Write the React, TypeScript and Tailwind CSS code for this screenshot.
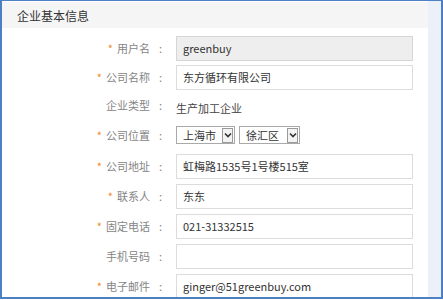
import React from 'react';

interface Field {
  label: string;
  required: boolean;
  value?: string;
  kind: 'input' | 'disabled' | 'text' | 'select';
  h: string;
}

const FIELDS: Field[] = [
  { label: '用户名', required: true, value: 'greenbuy', kind: 'disabled', h: 'h-[29px]' },
  { label: '公司名称', required: true, value: '东方循环有限公司', kind: 'input', h: 'h-[29px]' },
  { label: '企业类型', required: false, value: '生产加工企业', kind: 'text', h: 'h-[27px]' },
  { label: '公司位置', required: true, kind: 'select', h: 'h-[32px]' },
  { label: '公司地址', required: true, value: '虹梅路1535号1号楼515室', kind: 'input', h: 'h-[30px]' },
  { label: '联系人', required: true, value: '东东', kind: 'input', h: 'h-[30px]' },
  { label: '固定电话', required: true, value: '021-31332515', kind: 'input', h: 'h-[30px]' },
  { label: '手机号码', required: false, value: '', kind: 'input', h: 'h-[30px]' },
  { label: '电子邮件', required: true, value: 'ginger@51greenbuy.com', kind: 'input', h: 'h-[30px]' },
];

function Chevron() {
  return (
    <svg width="8" height="6" viewBox="0 0 8 6" fill="none">
      <path d="M1 1.5 L4 4.5 L7 1.5" stroke="#333" strokeWidth="1.6" />
    </svg>
  );
}

function FakeSelect({ value, w }: { value: string; w: string }) {
  return (
    <div className={`flex h-[18px] ${w} items-center justify-between border border-[#a9a9a9] bg-white pl-[6px] pr-[1px]`}>
      <span className="text-[11px] leading-none text-[#333]">{value}</span>
      <div className="flex h-[15px] w-[11px] items-center justify-center border border-[#9a9a9a] bg-[#f3f3f3]">
        <Chevron />
      </div>
    </div>
  );
}

export default function App() {
  return (
    <div
      className="flex h-[299px] w-[443px] overflow-hidden border-[#4d7fc4] border-t border-r-2 border-b-2 border-l-2 bg-white"
      style={{ fontFamily: '"Noto Sans CJK SC", "Microsoft YaHei", sans-serif' }}
    >
      <div className="flex min-h-0 flex-1 flex-col">
        {/* Section header */}
        <div className="mt-[1px] flex h-[26px] shrink-0 items-center bg-[#f5f5f5] pl-[15px] pt-[2px] text-[12px] text-[#333]">
          企业基本信息
        </div>

        <div className="mt-[6px] flex shrink-0 flex-col">
          {FIELDS.map((f) => (
            <div key={f.label} className={`flex shrink-0 items-center ${f.h}`}>
              <div className="flex w-[163px] items-center justify-end text-[11px] text-[#858585]">
                {f.required && <span className="mr-[4px] text-[#f08a2a]">*</span>}
                <span>{f.label}</span>
                <span className="ml-[9px] w-[6px]">:</span>
              </div>
              <div className="ml-[11px]">
                {f.kind === 'text' && (
                  <span className="text-[11px] text-[#444]">{f.value}</span>
                )}
                {f.kind === 'select' && (
                  <div className="flex gap-[4px]">
                    <FakeSelect value="上海市" w="w-[59px]" />
                    <FakeSelect value="徐汇区" w="w-[61px]" />
                  </div>
                )}
                {(f.kind === 'input' || f.kind === 'disabled') && (
                  <div
                    className={`flex h-[25px] w-[237px] items-center border pl-[6px] text-[11px] text-[#333] ${
                      f.kind === 'disabled'
                        ? 'border-[#d6d6d6] bg-[#eeeeee]'
                        : 'border-[#dcdcdc] bg-white'
                    }`}
                  >
                    {f.value}
                  </div>
                )}
              </div>
            </div>
          ))}
        </div>
      </div>

      {/* right side strip */}
      <div className="w-[13px] shrink-0 bg-[#ecf1f9]" />
    </div>
  );
}
